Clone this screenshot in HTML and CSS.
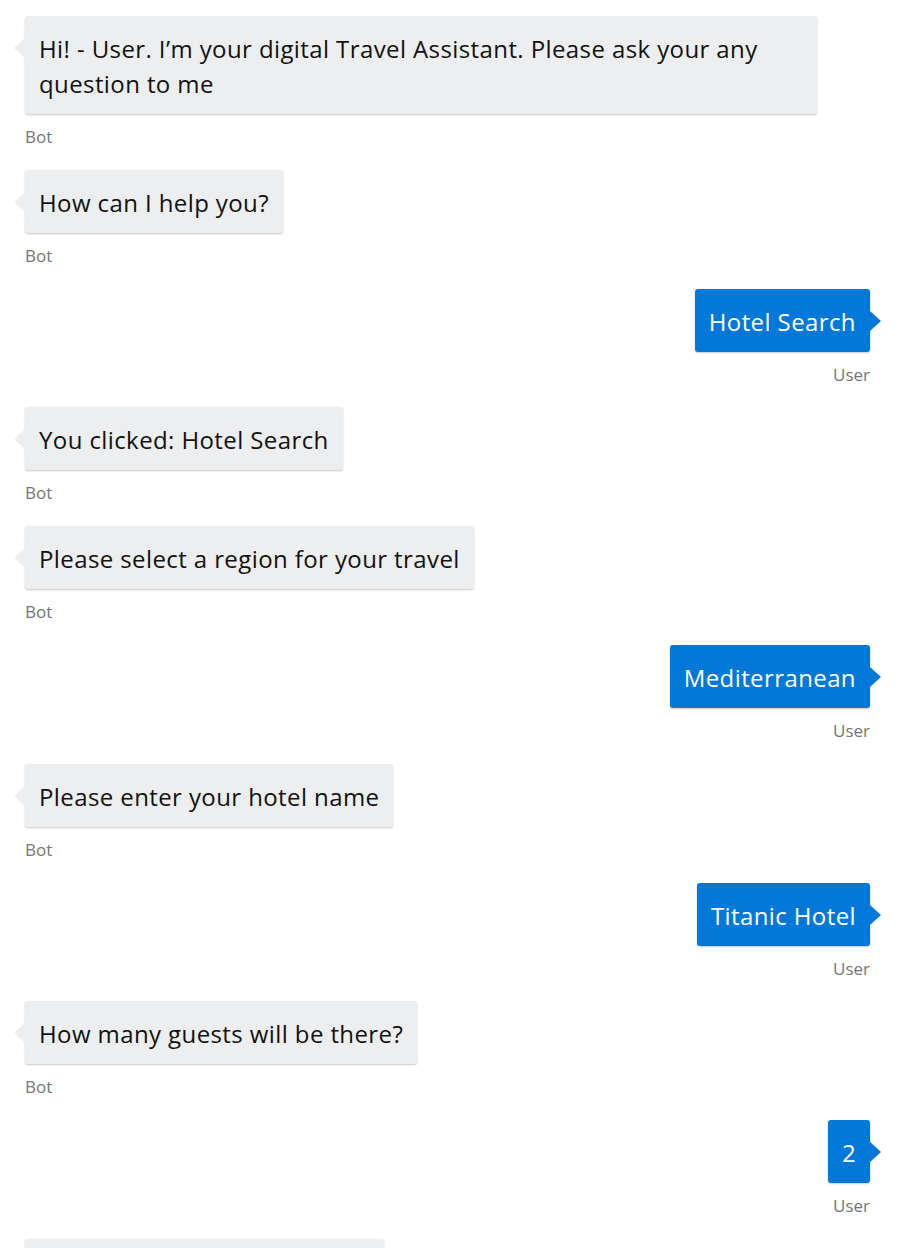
FILE: index.html
```html
<!DOCTYPE html>
<html lang="en">
<head>
<meta charset="utf-8">
<title>Travel Assistant</title>
<link rel="stylesheet" href="styles.css">
</head>
<body>
<div class="chat">
  <div class="msg bot">
    <div class="bubble">Hi! - User. I’m your digital Travel Assistant. Please ask your any question to me<svg class="callout" viewBox="0 0 11 20"><polygon points="11,0 0,10 11,20"/></svg></div>
    <div class="meta">Bot</div>
  </div>
  <div class="msg bot">
    <div class="bubble">How can I help you?<svg class="callout" viewBox="0 0 11 20"><polygon points="11,0 0,10 11,20"/></svg></div>
    <div class="meta">Bot</div>
  </div>
  <div class="msg user">
    <div class="bubble">Hotel Search<svg class="callout" viewBox="0 0 11 20"><polygon points="0,0 11,10 0,20"/></svg></div>
    <div class="meta">User</div>
  </div>
  <div class="msg bot">
    <div class="bubble">You clicked: Hotel Search<svg class="callout" viewBox="0 0 11 20"><polygon points="11,0 0,10 11,20"/></svg></div>
    <div class="meta">Bot</div>
  </div>
  <div class="msg bot">
    <div class="bubble">Please select a region for your travel<svg class="callout" viewBox="0 0 11 20"><polygon points="11,0 0,10 11,20"/></svg></div>
    <div class="meta">Bot</div>
  </div>
  <div class="msg user">
    <div class="bubble">Mediterranean<svg class="callout" viewBox="0 0 11 20"><polygon points="0,0 11,10 0,20"/></svg></div>
    <div class="meta">User</div>
  </div>
  <div class="msg bot">
    <div class="bubble">Please enter your hotel name<svg class="callout" viewBox="0 0 11 20"><polygon points="11,0 0,10 11,20"/></svg></div>
    <div class="meta">Bot</div>
  </div>
  <div class="msg user">
    <div class="bubble">Titanic Hotel<svg class="callout" viewBox="0 0 11 20"><polygon points="0,0 11,10 0,20"/></svg></div>
    <div class="meta">User</div>
  </div>
  <div class="msg bot">
    <div class="bubble">How many guests will be there?<svg class="callout" viewBox="0 0 11 20"><polygon points="11,0 0,10 11,20"/></svg></div>
    <div class="meta">Bot</div>
  </div>
  <div class="msg user">
    <div class="bubble">2<svg class="callout" viewBox="0 0 11 20"><polygon points="0,0 11,10 0,20"/></svg></div>
    <div class="meta">User</div>
  </div>
  <div class="msg bot">
    <div class="bubble">Please enter a check-in date:<svg class="callout" viewBox="0 0 11 20"><polygon points="11,0 0,10 11,20"/></svg></div>
    <div class="meta">Bot</div>
  </div>
</div>
</body>
</html>
```

FILE: styles.css
```css
html, body {
  margin: 0;
  padding: 0;
  background: #ffffff;
}

body {
  font-family: "Open Sans", "Noto Sans", "Liberation Sans", sans-serif;
}

.chat {
  display: flex;
  flex-direction: column;
  padding: 16px 30px 0 25px;
}

.msg {
  display: flex;
  flex-direction: column;
  align-items: flex-start;
  margin-bottom: 22px;
}

.msg.user {
  align-items: flex-end;
}

.bubble {
  position: relative;
  box-sizing: border-box;
  max-width: 792px;
  padding: 15px 14px 13px;
  font-size: 24px;
  letter-spacing: 0.4px;
  line-height: 35px;
  border-radius: 3px;
  box-shadow: 0 1px 2px rgba(0, 0, 0, 0.22);
}

.bot .bubble {
  background: #edeef0;
  color: #111111;
}

.user .bubble {
  background: #0078d7;
  color: #ffffff;
}

.callout {
  position: absolute;
  top: 22px;
  width: 11px;
  height: 20px;
}

.bot .callout {
  left: -11px;
  fill: #edeef0;
}

.user .callout {
  right: -11px;
  fill: #0078d7;
}

.meta {
  margin-top: 12px;
  font-size: 17px;
  line-height: 21.8px;
  color: #767676;
}
```
